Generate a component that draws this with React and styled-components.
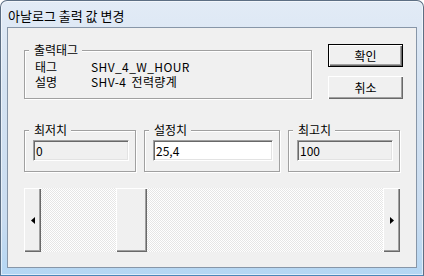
import styled, { createGlobalStyle, css } from "styled-components";

const UI_FONT = `"Noto Sans CJK KR", "Liberation Sans", sans-serif`;

const GlobalStyle = createGlobalStyle`
  html, body {
    margin: 0;
    padding: 0;
    background: #ffffff;
  }
  body {
    width: 424px;
    height: 276px;
    overflow: hidden;
  }
`;

const raised = css`
  background: #f0f0f0;
  box-shadow: inset 1px 1px #ffffff, inset -1px -1px #696969,
    inset -2px -2px #a0a0a0;
`;

const Window = styled.div`
  box-sizing: border-box;
  width: 424px;
  height: 276px;
  display: flex;
  flex-direction: column;
  border: 1px solid #5d6f84;
  border-bottom-color: #4a86b8;
  border-radius: 7px 7px 0 0;
  background: linear-gradient(
    to bottom,
    #e2ebf6 0%,
    #d5e3f2 30%,
    #c9dcf0 80%,
    #b4d6f3 100%
  );
  box-shadow: inset 0 0 0 1px rgba(255, 255, 255, 0.55);
`;

const TitleBar = styled.div`
  height: 26px;
  padding: 2px 0 0 7px;
  box-sizing: border-box;
  display: flex;
  align-items: center;
  font: 13px "Noto Sans CJK KR", sans-serif;
  color: #000000;
`;

const Client = styled.div`
  flex: 1;
  margin: 0 6px 7px 6px;
  border: 1px solid #8796a8;
  background: #f0f0f0;
  padding: 15px 0 0 16px;
  display: flex;
  flex-direction: column;
  font: 12px ${UI_FONT};
  color: #000000;
`;

const Row = styled.div`
  display: flex;
  align-items: flex-start;
  gap: ${(p) => p.$gap}px;
  margin-top: ${(p) => p.$top || 0}px;
`;

const GroupBox = styled.fieldset`
  box-sizing: border-box;
  width: ${(p) => p.$width}px;
  min-width: 0;
  margin: 0;
  padding: 0 0 ${(p) => p.$padBottom}px ${(p) => p.$padLeft}px;
  border: 1px solid #a0a0a0;
  box-shadow: inset 1px 1px #ffffff, 1px 1px #ffffff;
`;

const Caption = styled.legend`
  margin-left: ${(p) => 4 - p.$padLeft}px;
  padding: 0 4px 0 5px;
  line-height: 14px;
  background: #f0f0f0;
`;

const InfoGrid = styled.div`
  display: grid;
  grid-template-columns: 56px auto;
  line-height: 15px;
  margin-top: 2px;
  white-space: pre;
  word-spacing: 2px;
`;

const Spaced = styled.span`
  letter-spacing: 0.4px;
`;

const ButtonColumn = styled.div`
  display: flex;
  flex-direction: column;
  gap: 9px;
  margin-top: 1px;
`;

const Button = styled.button`
  box-sizing: border-box;
  width: 75px;
  height: 23px;
  padding: 0;
  border: none;
  font: 12px ${UI_FONT};
  color: #000000;
  ${raised};

  ${(p) =>
    p.$default &&
    css`
      border: 1px solid #000000;
    `}
`;

const Edit = styled.input`
  box-sizing: border-box;
  display: block;
  width: ${(p) => p.$width}px;
  height: 21px;
  margin: 3px 0 0 0;
  padding: 0 0 0 2px;
  border: 1px solid;
  border-color: #a0a0a0 #ffffff #ffffff #a0a0a0;
  box-shadow: inset 1px 1px #696969, inset -1px -1px #e3e3e3;
  background: ${(p) => (p.$disabled ? "#f0f0f0" : "#ffffff")};
  font: 12px ${UI_FONT};
  color: #000000;
  outline: none;
`;

const ScrollBar = styled.div`
  display: flex;
  width: 376px;
  height: 64px;
  margin-top: 16px;
`;

const ScrollButton = styled.div`
  box-sizing: border-box;
  width: 17px;
  display: flex;
  align-items: center;
  justify-content: center;
  ${raised};
`;

const Track = styled.div`
  flex: 1;
  display: flex;
  background-color: #ffffff;
  background-image: repeating-conic-gradient(#e6e6e6 0 25%, #ffffff 0 50%);
  background-size: 2px 2px;
`;

const Thumb = styled.div`
  width: 31px;
  ${raised};
`;

const Arrow = ({ dir }) => (
  <svg width="4" height="7" viewBox="0 0 4 7">
    <polygon
      points={dir === "left" ? "4,0 4,7 0,3.5" : "0,0 0,7 4,3.5"}
      fill="#000000"
    />
  </svg>
);

function ValueGroup({ title, width, editWidth, value, disabled }) {
  return (
    <GroupBox $width={width} $padLeft={8} $padBottom={10}>
      <Caption $padLeft={8}>{title}</Caption>
      <Edit
        $width={editWidth}
        $disabled={disabled}
        value={value}
        readOnly
      />
    </GroupBox>
  );
}

export default function App() {
  const min = 0;
  const max = 100;
  const value = 25.4;
  const trackSpace = 342 - 31;
  const thumbOffset = Math.round(((value - min) / (max - min)) * trackSpace * 0.955);

  return (
    <>
      <GlobalStyle />
      <Window>
        <TitleBar>아날로그 출력 값 변경</TitleBar>
        <Client>
          <Row $gap={16}>
            <GroupBox $width={288} $padLeft={10} $padBottom={9}>
              <Caption $padLeft={10}>출력태그</Caption>
              <InfoGrid>
                <span>태그</span>
                <Spaced>SHV_4_W_HOUR</Spaced>
                <span>설명</span>
                <Spaced>SHV-4 전력량계</Spaced>
              </InfoGrid>
            </GroupBox>
            <ButtonColumn>
              <Button $default>확인</Button>
              <Button>취소</Button>
            </ButtonColumn>
          </Row>

          <Row $gap={8} $top={24}>
            <ValueGroup title="최저치" width={112} editWidth={96} value="0" disabled />
            <ValueGroup title="설정치" width={136} editWidth={120} value="25,4" />
            <ValueGroup title="최고치" width={112} editWidth={96} value="100" disabled />
          </Row>

          <ScrollBar>
            <ScrollButton>
              <Arrow dir="left" />
            </ScrollButton>
            <Track>
              <Thumb style={{ marginLeft: thumbOffset }} />
            </Track>
            <ScrollButton>
              <Arrow dir="right" />
            </ScrollButton>
          </ScrollBar>
        </Client>
      </Window>
    </>
  );
}
